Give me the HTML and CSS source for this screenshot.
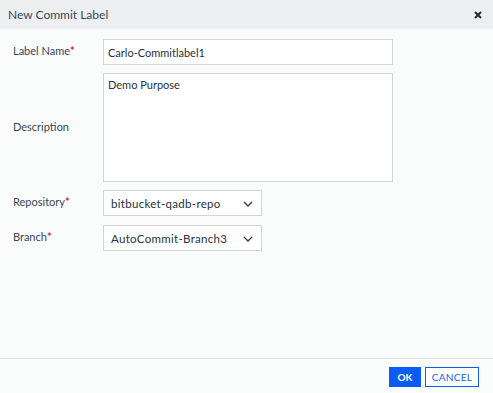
FILE: index.html
```html
<!DOCTYPE html>
<html>
<head>
<meta charset="utf-8">
<link rel="stylesheet" href="styles.css">
</head>
<body>
<div class="dialog">
  <div class="header">
    <span class="title">New Commit Label</span>
    <svg class="close" width="8" height="8" viewBox="0 0 8 8"><path d="M1 1L7 7M7 1L1 7" stroke="#1d2b3c" stroke-width="2"/></svg>
  </div>
  <div class="form">
    <div class="row">
      <label class="label">Label Name<span class="req">*</span></label>
      <div class="input wide">Carlo-Commitlabel1</div>
    </div>
    <div class="row">
      <label class="label">Description</label>
      <div class="input wide area">Demo Purpose</div>
    </div>
    <div class="row">
      <label class="label">Repository<span class="req">*</span></label>
      <div class="input select"><span>bitbucket-qadb-repo</span>
        <svg width="10" height="6" viewBox="0 0 10 6"><path d="M1 1L5 5L9 1" fill="none" stroke="#2b3a4d" stroke-width="1.3"/></svg></div>
    </div>
    <div class="row">
      <label class="label">Branch<span class="req">*</span></label>
      <div class="input select"><span>AutoCommit-Branch3</span>
        <svg width="10" height="6" viewBox="0 0 10 6"><path d="M1 1L5 5L9 1" fill="none" stroke="#2b3a4d" stroke-width="1.3"/></svg></div>
    </div>
  </div>
  <div class="footer">
    <button class="btn ok">OK</button>
    <button class="btn cancel">CANCEL</button>
  </div>
</div>
</body>
</html>
```
FILE: styles.css
```css
html, body {
  margin: 0;
  padding: 0;
}
body {
  background: #fafbfb;
  font-family: Lato, "Open Sans", sans-serif;
  color: #3a4655;
}
.dialog {
  display: flex;
  flex-direction: column;
  height: 393px;
}
.header {
  height: 29px;
  background: #eceef0;
  display: flex;
  align-items: center;
  justify-content: space-between;
  padding: 0 11px 0 8px;
}
.title {
  font-size: 12px;
  color: #3b4756;
}
.close {
  display: block;
}
.form {
  flex: 1;
  padding: 10px 0 0 13px;
  display: flex;
  flex-direction: column;
  gap: 8px;
}
.row {
  display: flex;
  align-items: center;
}
.label {
  width: 90px;
  font-size: 11px;
  color: #3b4756;
  margin-top: -3px;
}
.req {
  color: #e4232f;
  font-weight: bold;
}
.input {
  box-sizing: border-box;
  background: #fff;
  border: 1px solid #d2d4d6;
  height: 26px;
  font-size: 11px;
  color: #27313d;
  display: flex;
  align-items: center;
  padding-left: 4px;
}
.wide {
  width: 290px;
}
.area {
  height: 109px;
  align-items: flex-start;
  padding-top: 4px;
}
.select {
  width: 159px;
  justify-content: space-between;
  padding: 0 8px 0 7px;
  font-size: 11.5px;
  letter-spacing: 0.3px;
}
.select svg {
  margin-top: 2px;
}
.row:last-child {
  margin-top: 1px;
}
.footer {
  border-top: 1px solid #e2e4e6;
  height: 35px;
  display: flex;
  justify-content: flex-end;
  align-items: flex-start;
  padding: 8px 14px 0 0;
  gap: 4px;
  box-sizing: border-box;
}
.btn {
  height: 20px;
  font-family: Lato, sans-serif;
  font-size: 10px;
  font-weight: bold;
  padding: 0;
  border-radius: 0;
}
.ok {
  width: 32px;
  background: #0a5cf5;
  color: #fff;
  border: none;
}
.cancel {
  width: 54px;
  background: #fff;
  color: #1a5ef0;
  border: 1px solid #0a5cf5;
  font-weight: normal;
  letter-spacing: 0.3px;
}
```
